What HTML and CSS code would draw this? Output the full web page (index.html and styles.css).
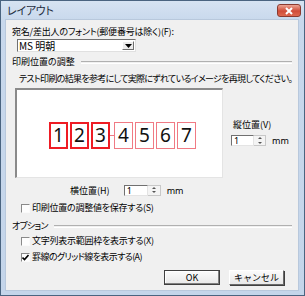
FILE: index.html
```html
<!DOCTYPE html>
<html lang="ja">
<head>
  <meta charset="UTF-8" />
  <title>レイアウト</title>
  <link rel="stylesheet" href="styles.css">
</head>
<body>
  <div class="window">
    <div class="titlebar">
      <span class="title">レイアウト</span>
      <span class="close">
        <svg width="10" height="8" viewBox="0 0 10 8"><path d="M2 1 L8 7 M8 1 L2 7" stroke="#fff" stroke-width="2"/></svg>
      </span>
    </div>
    <div class="client">
      <div class="text-row label-font">宛名/差出人のフォント(郵便番号は除く)(F):</div>
      <div class="combo">
        <span class="combo-value">MS 明朝</span>
        <span class="combo-btn"><svg width="7" height="4" viewBox="0 0 7 4"><path d="M0 0 H7 L3.5 4 Z" fill="#000"/></svg></span>
      </div>

      <div class="group-title first"><span>印刷位置の調整</span></div>
      <div class="text-row hint">テスト印刷の結果を参考にして実際にずれているイメージを再現してください。</div>

      <div class="adjust">
        <div class="preview">
          <div class="digits">
            <span class="cell strong">1</span>
            <span class="cell strong">2</span>
            <span class="cell strong">3</span>
            <span class="link"></span>
            <span class="cell">4</span>
            <span class="cell">5</span>
            <span class="cell">6</span>
            <span class="cell">7</span>
          </div>
        </div>
        <div class="vpos">
          <div class="text-row">縦位置(V)</div>
          <div class="spin-row">
            <span class="spin-input">1</span>
            <span class="spin-btns"><i class="up"></i><i class="down"></i></span>
            <span class="unit">mm</span>
          </div>
        </div>
      </div>

      <div class="hpos">
        <span class="hpos-label">横位置(H)</span>
        <span class="spin-input">1</span>
        <span class="spin-btns"><i class="up"></i><i class="down"></i></span>
        <span class="unit">mm</span>
      </div>

      <div class="check save"><span class="box"></span>印刷位置の調整値を保存する(S)</div>

      <div class="group-title option"><span>オプション</span></div>
      <div class="check frame"><span class="box"></span>文字列表示範囲枠を表示する(X)</div>
      <div class="check grid"><span class="box"><svg width="7" height="7" viewBox="0 0 7 7"><path d="M0.5 3.5 L2.5 5.5 L6.5 1" stroke="#000" stroke-width="1.6" fill="none"/></svg></span>罫線のグリッド線を表示する(A)</div>

      <div class="buttons">
        <button class="btn default">OK</button>
        <button class="btn">キャンセル</button>
      </div>
    </div>
  </div>
</body>
</html>
```

FILE: styles.css
```css
body {
  margin: 0;
  background: #f0f0f0;
  font-family: "Noto Sans CJK JP", "Noto Sans", sans-serif;
  font-size: 9px;
  font-feature-settings: "palt";
  color: #000;
}

.window {
  width: 305px;
  height: 296px;
  box-sizing: border-box;
  border: 1px solid #4a6480;
  background: linear-gradient(#d6e3f2, #c8d8ec 20px, #c4d5ea);
  display: flex;
  flex-direction: column;
}

.titlebar {
  height: 18px;
  display: flex;
  align-items: center;
  justify-content: space-between;
  padding: 0 3px 0 6px;
}

.title {
  font-size: 11px;
  color: #1e2e40;
  letter-spacing: -0.3px;
}

.close {
  width: 24px;
  height: 13px;
  margin-top: 1px;
  border: 1px solid #8a3a30;
  border-radius: 3px;
  box-sizing: border-box;
  background: linear-gradient(#eca494, #d04c38 55%, #de684e);
  display: flex;
  align-items: center;
  justify-content: center;
}

.client {
  margin: 0 5px 4px 4px;
  height: 272px;
  background: #f0f0f0;
  border: 1px solid #b8c8dc;
  box-sizing: border-box;
  padding: 0 0 0 5px;
  overflow: hidden;
}

.text-row {
  line-height: 12px;
  height: 12px;
  white-space: nowrap;
}

.label-font {
  margin-top: 6px;
  margin-left: 1px;
  letter-spacing: -0.2px;
}

.combo {
  margin: 1px 0 0 6px;
  width: 119px;
  height: 13px;
  box-sizing: border-box;
  background: #fff;
  border: 1px solid;
  border-color: #707070 #e0e0e0 #e0e0e0 #707070;
  display: flex;
  align-items: center;
  justify-content: space-between;
}

.combo-value {
  font-size: 10px;
  line-height: 11px;
  padding-left: 1px;
}

.combo-btn {
  width: 12px;
  height: 9px;
  margin-right: 1px;
  background: #ececec;
  border: 1px solid;
  border-color: #fff #707070 #707070 #fff;
  box-sizing: border-box;
  display: flex;
  align-items: center;
  justify-content: center;
}

.group-title {
  display: flex;
  align-items: center;
  gap: 6px;
  height: 12px;
  line-height: 12px;
  margin-left: 1px;
  margin-right: 6px;
}

.group-title::after {
  content: "";
  flex: 1;
  height: 1px;
  border-top: 1px solid #b0b0b0;
  border-bottom: 1px solid #fff;
}

.group-title.first {
  margin-top: 4px;
}

.hint {
  margin: 5px 0 0 8px;
  letter-spacing: -0.7px;
}

.adjust {
  display: flex;
  margin-top: 3px;
}

.preview {
  margin-left: 4px;
  width: 208px;
  height: 90px;
  box-sizing: border-box;
  background: #fff;
  border-style: solid;
  border-width: 2px 1px 1px 2px;
  border-color: #8a8a8a #e4e4e4 #e4e4e4 #8a8a8a;
}

.digits {
  display: flex;
  padding: 32px 0 0 32px;
}

.cell {
  width: 19px;
  height: 27px;
  box-sizing: border-box;
  border: 1px solid #f07a84;
  margin-left: 2px;
  font-family: "Noto Sans", sans-serif;
  font-size: 19px;
  line-height: 25px;
  text-align: center;
  color: #111;
  font-feature-settings: normal;
}

.cell:first-child {
  margin-left: 0;
}

.cell.strong {
  border: 2px solid #ee1c24;
  line-height: 23px;
}

.link {
  width: 4px;
  height: 1px;
  margin-top: 13px;
  background: #f07a84;
}

.link + .cell {
  margin-left: 0;
}

.vpos {
  margin: 31px 0 0 10px;
}

.spin-row {
  display: flex;
  align-items: center;
  margin: 3px 0 0 -2px;
}

.spin-input {
  width: 23px;
  height: 11px;
  box-sizing: border-box;
  background: #fff;
  border: 1px solid;
  border-color: #707070 #e4e4e4 #e4e4e4 #707070;
  font-family: "Noto Sans", sans-serif;
  font-size: 9px;
  line-height: 9px;
  padding-left: 2px;
}

.spin-btns {
  width: 12px;
  height: 11px;
  box-sizing: border-box;
  border: 1px solid #c8c8c8;
  border-left: none;
  background: #f4f4f4;
  display: flex;
  flex-direction: column;
  justify-content: space-around;
  align-items: center;
}

.spin-btns i {
  display: block;
  width: 0;
  height: 0;
  border-left: 2px solid transparent;
  border-right: 2px solid transparent;
}

.spin-btns .up {
  border-bottom: 2px solid #555;
}

.spin-btns .down {
  border-top: 2px solid #555;
}

.unit {
  margin-left: 6px;
  font-family: "Noto Sans", sans-serif;
  font-size: 9px;
}

.hpos {
  display: flex;
  align-items: center;
  height: 12px;
  margin: 6px 0 0 59px;
}

.hpos-label {
  margin-right: 14px;
}

.hpos .spin-input {
  width: 24px;
}

.hpos .spin-btns {
  width: 13px;
}

.check {
  display: flex;
  align-items: center;
  height: 12px;
  line-height: 12px;
  white-space: nowrap;
  letter-spacing: -0.25px;
  margin-left: 10px;
}

.check .box {
  width: 9px;
  height: 9px;
  box-sizing: border-box;
  border: 1px solid;
  border-color: #8a8a8a #fafafa #fafafa #8a8a8a;
  background: #fdfdfd;
  margin-right: 2px;
  display: flex;
  align-items: center;
  justify-content: center;
}

.check.save {
  margin-top: 6px;
}

.group-title.option {
  margin-top: 6px;
  letter-spacing: -0.8px;
}

.check.frame {
  margin-top: 3px;
}

.check.grid {
  margin-top: 4px;
  letter-spacing: -0.6px;
}

.buttons {
  display: flex;
  justify-content: flex-end;
  gap: 9px;
  margin: 7px 14px 0 0;
}

.btn {
  height: 15px;
  box-sizing: border-box;
  padding: 0;
  font-family: "Noto Sans CJK JP", sans-serif;
  font-size: 9px;
  line-height: 12px;
  background: linear-gradient(#fbfbfb, #e8e8e8);
  border: 1px solid;
  border-color: #fff #6a6a6a #6a6a6a #fff;
  box-shadow: 1px 1px 0 #404040;
  width: 55px;
  color: #000;
}

.btn.default {
  width: 56px;
  border-color: #404040;
  box-shadow: inset -1px -1px 0 #808080, inset 1px 1px 0 #fff;
}
```
